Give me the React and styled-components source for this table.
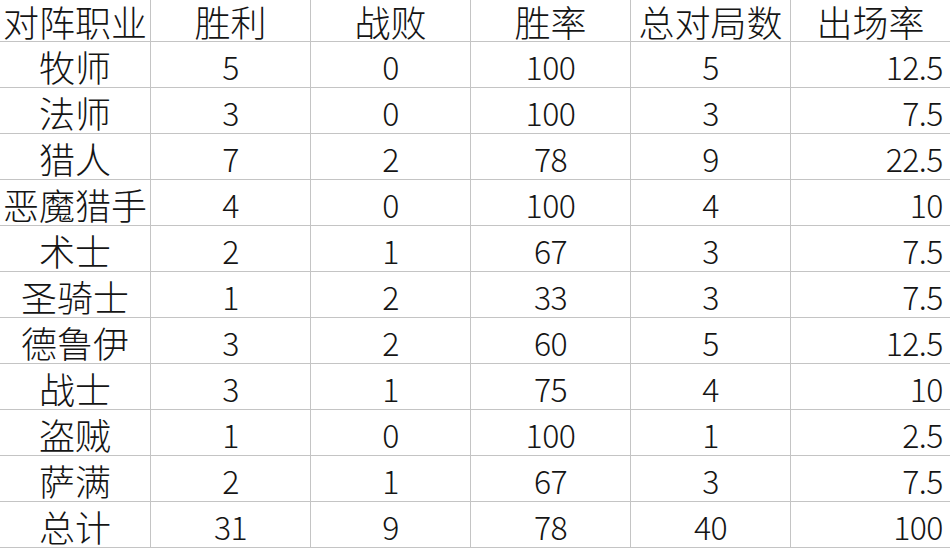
import React from "react";
import styled, { createGlobalStyle } from "styled-components";

const GlobalStyle = createGlobalStyle`
  html, body {
    margin: 0;
    padding: 0;
    background: #ffffff;
  }
  body {
    font-family: "Noto Sans CJK SC", "Noto Sans", sans-serif;
    color: #151515;
  }
`;

const Sheet = styled.div`
  width: 950px;
  height: 548px;
  overflow: hidden;
  background: #ffffff;
`;

const Row = styled.div`
  display: grid;
  grid-template-columns: 151px 160px 160px 160px 160px 159px;
  height: ${(p) => (p.$header ? 42 : 46)}px;
  box-sizing: border-box;
  border-bottom: 1px solid #c4c4c4;
`;

const Cell = styled.div`
  box-sizing: border-box;
  display: flex;
  align-items: center;
  justify-content: ${(p) => (p.$align === "right" ? "flex-end" : "center")};
  padding: ${(p) => (p.$align === "right" ? "3px 7px 0 0" : "3px 0 0 0")};
  border-right: ${(p) => (p.$last ? "none" : "1px solid #c4c4c4")};
  font-size: ${(p) => (p.$num ? 32 : 36)}px;
  font-weight: 300;
  line-height: 1;
  white-space: nowrap;
  letter-spacing: ${(p) => (p.$num ? "-0.5px" : "0")};
`;

const HeaderCell = styled(Cell)`
  padding: 0;
  font-size: 36px;
  letter-spacing: 0;
`;

const headers = ["对阵职业", "胜利", "战败", "胜率", "总对局数", "出场率"];

const rows = [
  ["牧师", 5, 0, 100, 5, 12.5],
  ["法师", 3, 0, 100, 3, 7.5],
  ["猎人", 7, 2, 78, 9, 22.5],
  ["恶魔猎手", 4, 0, 100, 4, 10],
  ["术士", 2, 1, 67, 3, 7.5],
  ["圣骑士", 1, 2, 33, 3, 7.5],
  ["德鲁伊", 3, 2, 60, 5, 12.5],
  ["战士", 3, 1, 75, 4, 10],
  ["盗贼", 1, 0, 100, 1, 2.5],
  ["萨满", 2, 1, 67, 3, 7.5],
  ["总计", 31, 9, 78, 40, 100],
];

const App = () => {
  return (
    <>
      <GlobalStyle />
      <Sheet>
        <Row $header>
          {headers.map((h, i) => (
            <HeaderCell key={h} $last={i === headers.length - 1}>
              {h}
            </HeaderCell>
          ))}
        </Row>
        {rows.map((r) => (
          <Row key={r[0]}>
            {r.map((v, i) => (
              <Cell
                key={i}
                $num={i > 0}
                $last={i === r.length - 1}
                $align={i === r.length - 1 ? "right" : "center"}
              >
                {v}
              </Cell>
            ))}
          </Row>
        ))}
      </Sheet>
    </>
  );
};

export default App;
